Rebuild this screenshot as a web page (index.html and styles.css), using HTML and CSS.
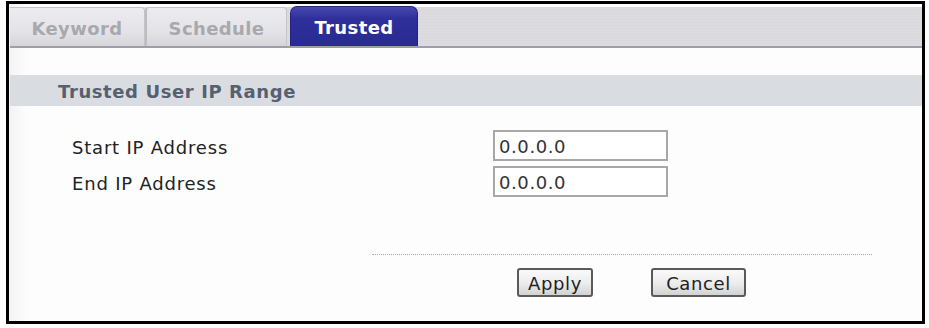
FILE: index.html
```html
<!DOCTYPE html>
<html lang="en">

<head>
    <meta charset="UTF-8">
    <meta name="viewport" content="width=device-width, initial-scale=1.0">
    <title>Trusted</title>
    <link rel="stylesheet" href="styles.css">
</head>

<body>
    <div class="frame">
        <div class="tab-bar">
            <div class="tab tab-keyword">Keyword</div>
            <div class="tab tab-schedule">Schedule</div>
            <div class="tab tab-active">Trusted</div>
        </div>

        <div class="section-title">Trusted User IP Range</div>

        <div class="form-grid">
            <label class="field-label" for="startIp">Start IP Address</label>
            <input class="ip-input" id="startIp" type="text" value="0.0.0.0">
            <label class="field-label" for="endIp">End IP Address</label>
            <input class="ip-input" id="endIp" type="text" value="0.0.0.0">
        </div>

        <div class="divider"></div>

        <div class="btn-box">
            <button class="btn btn-apply">Apply</button>
            <button class="btn btn-cancel">Cancel</button>
        </div>
    </div>
</body>

</html>
```

FILE: styles.css
```css
body {
    margin: 0;
    background-color: #fff;
    font-family: 'DejaVu Sans', Verdana, sans-serif;
}

.frame {
    box-sizing: border-box;
    width: 919px;
    height: 323px;
    margin: 1px 0 0 6px;
    border: 3px solid #000;
    padding: 3px 0 0 1px;
    background: linear-gradient(to right, #f3f3f5 0, #fdfdfe 18px, #fdfdfe 100%);
}

/* Tabs */
.tab-bar {
    display: flex;
    align-items: flex-end;
    height: 39px;
    border-bottom: 2px solid #9e9ea8;
    background: repeating-linear-gradient(to bottom, #d8d8dd 0, #d8d8dd 1px, #dcdce0 1px, #dcdce0 3px);
}

.tab {
    box-sizing: border-box;
    height: 39px;
    display: flex;
    align-items: center;
    justify-content: center;
    padding-top: 2px;
    font-weight: bold;
    font-size: 18px;
    letter-spacing: 0.4px;
    color: #a9a9ad;
    border: 1px solid #c4c4ca;
    border-bottom: none;
    border-radius: 4px 4px 0 0;
    background: linear-gradient(to bottom, #ececf0 0, #e4e4e8 60%, #d6d6da 100%);
}

.tab-keyword {
    width: 135px;
    border-left: none;
    border-radius: 0 4px 0 0;
}

.tab-schedule {
    width: 142px;
    border-left: 2px solid #bcbcc2;
}

.tab-active {
    width: 128px;
    height: 40px;
    margin-left: 3px;
    color: #fff;
    border: 1px solid #23237a;
    border-bottom: none;
    border-radius: 7px 7px 0 0;
    background: linear-gradient(to bottom, #4848b0 0, #2f2f9a 30%, #2a2a94 100%);
}

/* Section */
.section-title {
    margin-top: 27px;
    height: 31px;
    line-height: 33px;
    padding-left: 48px;
    background-color: #d9dde1;
    color: #566070;
    font-weight: bold;
    font-size: 18px;
    letter-spacing: 0.6px;
}

.form-grid {
    display: grid;
    grid-template-columns: 421px 175px;
    grid-auto-rows: 31px;
    row-gap: 5px;
    align-items: center;
    margin: 24px 0 0 62px;
}

.field-label {
    padding-top: 3px;
    font-size: 18px;
    letter-spacing: 0.8px;
    color: #222;
}

.ip-input {
    box-sizing: border-box;
    width: 175px;
    height: 31px;
    padding: 2px 4px 0;
    border: 2px solid #a8a8a8;
    font-family: 'DejaVu Sans', Verdana, sans-serif;
    font-size: 18px;
    letter-spacing: 0.6px;
    color: #333;
    background-color: #fff;
}

.divider {
    width: 500px;
    margin: 57px 0 0 362px;
    border-top: 1px dotted #a8a8a8;
}

.btn-box {
    display: flex;
    gap: 58px;
    margin: 13px 0 0 507px;
}

.btn {
    box-sizing: border-box;
    height: 29px;
    border: 2px solid #5a5a5a;
    border-radius: 3px;
    background: linear-gradient(to bottom, #fafafa 0, #ececec 55%, #d2d2d2 100%);
    font-family: 'DejaVu Sans', Verdana, sans-serif;
    font-size: 18px;
    letter-spacing: 0.6px;
    color: #222;
    padding: 2px 0 0;
}

.btn-apply {
    width: 76px;
}

.btn-cancel {
    width: 95px;
}
```
